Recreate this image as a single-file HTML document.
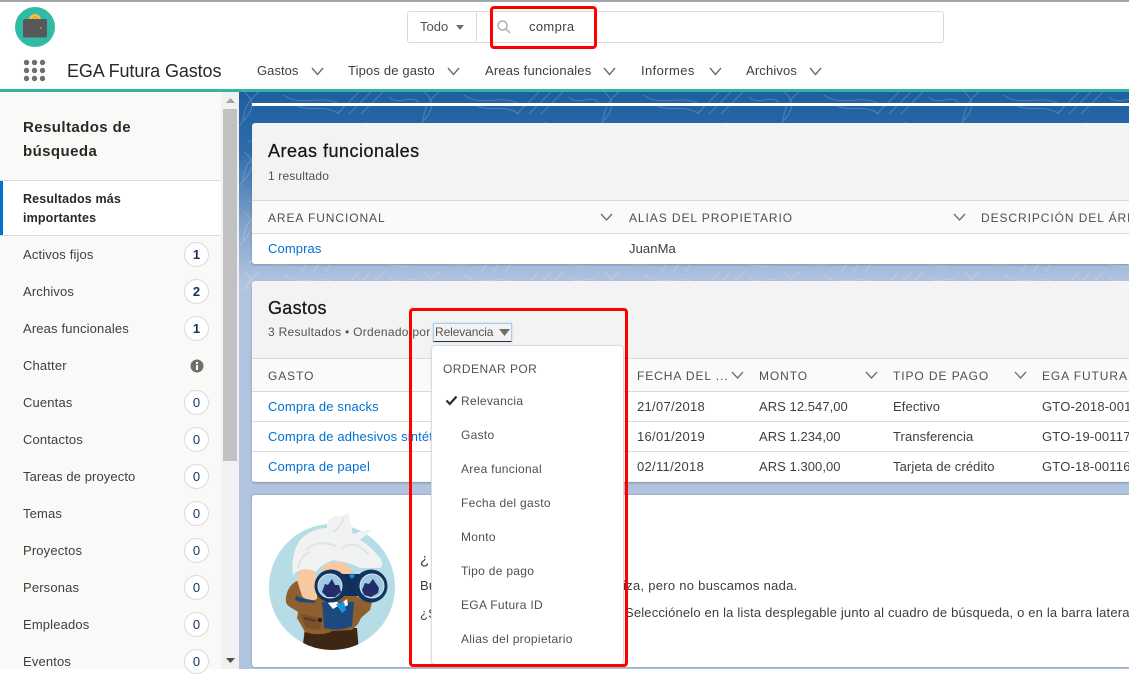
<!DOCTYPE html>
<html lang="es"><head><meta charset="utf-8"><title>EGA Futura Gastos</title>
<style>
html,body{margin:0;padding:0}
body{width:1129px;height:669px;overflow:hidden;position:relative;background:#fff;font-family:"Liberation Sans",sans-serif;color:#3e3e3c}
.a{position:absolute}
.t{position:absolute;white-space:nowrap;font-size:13px;line-height:16px;letter-spacing:.2px;color:#3e3e3c}
.n{font-size:13px;color:#3e3e3c}
.s{color:#3e3e3c;letter-spacing:.15px}
.b{position:absolute;left:184px;width:23px;height:23px;border:1px solid #dddbda;border-radius:50%;background:#fff;text-align:center;font-size:13px;line-height:23px;color:#16325c}
.th{font-size:12px;letter-spacing:.92px;color:#514f4d}
.lk{color:#0070d2}
.m{color:#514f4d;font-size:12px;letter-spacing:.3px}
.hl{position:absolute;height:1px;background:#dddbda}
svg{position:absolute;overflow:visible}
</style></head><body>

<!-- top bar -->
<div class="a" style="left:0;top:0;width:1129px;height:2px;background:#a3a3ab"></div>
<div class="a" style="left:15px;top:7px;width:40px;height:40px;border-radius:50%;background:#2fbba6"></div>
<svg style="left:15px;top:7px" width="40" height="40" viewBox="0 0 40 40">
<circle cx="20" cy="13" r="6" fill="#f4c542"/><circle cx="20" cy="13" r="3" fill="none" stroke="#d69a1f" stroke-width="1"/>
<rect x="8" y="12" width="24" height="18.500" rx="2" fill="#58585a"/>
<circle cx="26" cy="21" r=".8" fill="#e3b23c"/></svg>
<svg style="left:23px;top:59px" width="24" height="24" fill="#706e6b">
<circle cx="3.500" cy="3.500" r="2.700"/><circle cx="11.500" cy="3.500" r="2.700"/><circle cx="19.500" cy="3.500" r="2.700"/>
<circle cx="3.500" cy="11.500" r="2.700"/><circle cx="11.500" cy="11.500" r="2.700"/><circle cx="19.500" cy="11.500" r="2.700"/>
<circle cx="3.500" cy="19.500" r="2.700"/><circle cx="11.500" cy="19.500" r="2.700"/><circle cx="19.500" cy="19.500" r="2.700"/></svg>
<span class="t" style="left:67px;top:61px;font-size:18px;line-height:20px;letter-spacing:-.1px;color:#2b2826">EGA Futura Gastos</span>

<span class="t n" style="left:257px;top:63px;letter-spacing:.05px">Gastos</span>
<svg style="left:311px;top:67px" width="13" height="9" fill="none" stroke="#706e6b" stroke-width="1.400"><path d="M1 1l5.500 6.500L12 1"/></svg>
<span class="t n" style="left:348px;top:63px;letter-spacing:.15px">Tipos de gasto</span>
<svg style="left:447px;top:67px" width="13" height="9" fill="none" stroke="#706e6b" stroke-width="1.400"><path d="M1 1l5.500 6.500L12 1"/></svg>
<span class="t n" style="left:485px;top:63px;letter-spacing:.18px">Areas funcionales</span>
<svg style="left:603px;top:67px" width="13" height="9" fill="none" stroke="#706e6b" stroke-width="1.400"><path d="M1 1l5.500 6.500L12 1"/></svg>
<span class="t n" style="left:641px;top:63px;letter-spacing:.4px">Informes</span>
<svg style="left:709px;top:67px" width="13" height="9" fill="none" stroke="#706e6b" stroke-width="1.400"><path d="M1 1l5.500 6.500L12 1"/></svg>
<span class="t n" style="left:746px;top:63px;letter-spacing:.15px">Archivos</span>
<svg style="left:809px;top:67px" width="13" height="9" fill="none" stroke="#706e6b" stroke-width="1.400"><path d="M1 1l5.500 6.500L12 1"/></svg>

<!-- search -->
<div class="a" style="left:407px;top:11px;width:535px;height:30px;border:1px solid #dddbda;border-radius:3px;background:#fff"></div>
<div class="a" style="left:476px;top:12px;width:1px;height:30px;background:#dddbda"></div>
<span class="t" style="left:420px;top:19px;color:#54524f;letter-spacing:0">Todo</span>
<svg style="left:456px;top:25px" width="8" height="5"><path d="M0 0h8L4 5z" fill="#706e6b"/></svg>
<svg style="left:497px;top:20px" width="14" height="14" fill="none" stroke="#b0adab" stroke-width="1.500"><circle cx="5.500" cy="5.500" r="4.500"/><path d="M9 9l4 4"/></svg>
<span class="t" style="left:529px;top:19px;color:#3e3e3c;letter-spacing:.35px">compra</span>

<div class="a" style="left:0;top:89px;width:1129px;height:3px;background:#2fb5a0"></div>

<!-- main background -->
<div class="a" style="left:239px;top:92px;width:890px;height:577px;background:#b0c4df;background-image:linear-gradient(#1e5e9f 0,#2f6cab 60px,#7fa0c9 130px,#b0c4df 190px,#b0c4df 100%)"></div>
<svg style="left:239px;top:92px;overflow:hidden" width="890" height="200">
<defs><pattern id="c" width="180" height="60" patternUnits="userSpaceOnUse">
<g fill="none" stroke="#fff" stroke-opacity=".2" stroke-width="1">
<path d="M5 0c16 12 4 24 -5 34M20 0c-10 8 -14 14 -16 28M45 3c18 14 40 -4 60 12M58 14c14 6 28 -2 42 8M120 0l-22 22M132 0l-22 22M144 0l-22 22M150 5c10 10 22 -4 30 6M28 34c14 -6 30 8 46 0s24 6 40 2M126 30c16 12 30 2 54 12M10 50c12 -6 24 6 38 2M70 48l-8 12M82 48l-8 12M94 48l-8 12M130 50c10 -4 22 6 40 4"/>
</g></pattern></defs>
<rect width="890" height="200" fill="url(#c)"/></svg>
<div class="a" style="left:252px;top:103px;width:877px;height:3px;background:#fff"></div>

<!-- sidebar -->
<div class="a" style="left:0;top:92px;width:222px;height:577px;background:#f9f9f8"></div>
<span class="t" style="left:23px;top:116px;font-size:15px;line-height:24px;font-weight:bold;color:#2b2826;white-space:normal;width:140px;letter-spacing:.42px">Resultados de búsqueda</span>
<div class="a" style="left:0;top:180px;width:221px;height:54px;background:#fff;border-top:1px solid #dddbda;border-bottom:1px solid #dddbda"></div>
<div class="a" style="left:0;top:181px;width:3px;height:54px;background:#0070d2"></div>
<span class="t" style="left:23px;top:190px;font-weight:bold;line-height:19px;font-size:12.500px;color:#2b2826;width:140px;white-space:normal;letter-spacing:.15px">Resultados más importantes</span>

<span class="t s" style="left:23px;top:247px">Activos fijos</span><div class="b" style="top:242px;font-weight:bold">1</div>
<span class="t s" style="left:23px;top:284px">Archivos</span><div class="b" style="top:279px;font-weight:bold">2</div>
<span class="t s" style="left:23px;top:321px">Areas funcionales</span><div class="b" style="top:316px;font-weight:bold">1</div>
<span class="t s" style="left:23px;top:358px">Chatter</span>
<svg style="left:190px;top:359px" width="14" height="14"><circle cx="7" cy="7" r="6.500" fill="#706e6b"/><rect x="6" y="6" width="2" height="5" fill="#fff"/><rect x="6" y="3" width="2" height="2" fill="#fff"/></svg>
<span class="t s" style="left:23px;top:395px">Cuentas</span><div class="b" style="top:390px">0</div>
<span class="t s" style="left:23px;top:432px">Contactos</span><div class="b" style="top:427px">0</div>
<span class="t s" style="left:23px;top:469px;letter-spacing:.1px">Tareas de proyecto</span><div class="b" style="top:464px">0</div>
<span class="t s" style="left:23px;top:506px">Temas</span><div class="b" style="top:501px">0</div>
<span class="t s" style="left:23px;top:543px">Proyectos</span><div class="b" style="top:538px">0</div>
<span class="t s" style="left:23px;top:580px">Personas</span><div class="b" style="top:575px">0</div>
<span class="t s" style="left:23px;top:617px">Empleados</span><div class="b" style="top:612px">0</div>
<span class="t s" style="left:23px;top:654px">Eventos</span><div class="b" style="top:649px">0</div>

<!-- scrollbar -->
<div class="a" style="left:221px;top:92px;width:18px;height:577px;background:#f1f1f1"></div>
<div class="a" style="left:223px;top:109px;width:14px;height:352px;background:#c1c1c1"></div>
<svg style="left:226px;top:98px" width="9" height="5"><path d="M0 5L4.500 0 9 5z" fill="#a3a3a3"/></svg>
<svg style="left:226px;top:658px" width="9" height="5"><path d="M0 0L4.500 5 9 0z" fill="#505050"/></svg>

<!-- card 1 -->
<div class="a" style="left:252px;top:123px;width:877px;height:141px;background:#f3f3f3;border-radius:3px 0 0 3px;box-shadow:0 1px 2px rgba(0,0,0,.2)"></div>
<span class="t" style="left:268px;top:140px;font-size:18px;line-height:22px;letter-spacing:.5px;color:#16161a;-webkit-text-stroke:.25px #16161a">Areas funcionales</span>
<span class="t" style="left:268px;top:168px;font-size:12px;letter-spacing:.15px;color:#54524f">1 resultado</span>
<div class="a" style="left:252px;top:200px;width:877px;height:32px;background:#fafaf9;border-top:1px solid #dddbda;border-bottom:1px solid #dddbda"></div>
<div class="a" style="left:252px;top:234px;width:877px;height:30px;background:#fff;border-radius:0 0 0 3px"></div>
<span class="t th" style="left:268px;top:210px">AREA FUNCIONAL</span>
<svg style="left:600px;top:213px" width="13" height="8" fill="none" stroke="#706e6b" stroke-width="1.300"><path d="M1 1l5.500 6L12 1"/></svg>
<span class="t th" style="left:629px;top:210px">ALIAS DEL PROPIETARIO</span>
<svg style="left:953px;top:213px" width="13" height="8" fill="none" stroke="#706e6b" stroke-width="1.300"><path d="M1 1l5.500 6L12 1"/></svg>
<span class="t th" style="left:981px;top:210px">DESCRIPCIÓN DEL ÁREA</span>
<span class="t lk" style="left:268px;top:241px;letter-spacing:.1px">Compras</span>
<span class="t" style="left:629px;top:241px;letter-spacing:.1px">JuanMa</span>

<!-- card 2 -->
<div class="a" style="left:252px;top:281px;width:877px;height:201px;background:#f3f3f3;border-radius:3px 0 0 3px;box-shadow:0 1px 2px rgba(0,0,0,.25)"></div>
<span class="t" style="left:268px;top:297px;font-size:18px;line-height:22px;letter-spacing:.3px;color:#16161a;-webkit-text-stroke:.25px #16161a">Gastos</span>
<span class="t" style="left:268px;top:324px;font-size:12px;letter-spacing:.28px;color:#54524f">3 Resultados • Ordenado por</span>
<div class="a" style="left:252px;top:358px;width:877px;height:32px;background:#fafaf9;border-top:1px solid #dddbda;border-bottom:1px solid #dddbda"></div>
<div class="a" style="left:252px;top:392px;width:877px;height:89px;background:#fff"></div>
<div class="hl" style="left:252px;top:421px;width:877px"></div>
<div class="hl" style="left:252px;top:451px;width:877px"></div>
<span class="t th" style="left:268px;top:368px">GASTO</span>
<span class="t th" style="left:637px;top:368px">FECHA DEL ...</span>
<svg style="left:731px;top:371px" width="13" height="8" fill="none" stroke="#706e6b" stroke-width="1.300"><path d="M1 1l5.500 6L12 1"/></svg>
<span class="t th" style="left:759px;top:368px">MONTO</span>
<svg style="left:865px;top:371px" width="13" height="8" fill="none" stroke="#706e6b" stroke-width="1.300"><path d="M1 1l5.500 6L12 1"/></svg>
<span class="t th" style="left:893px;top:368px">TIPO DE PAGO</span>
<svg style="left:1014px;top:371px" width="13" height="8" fill="none" stroke="#706e6b" stroke-width="1.300"><path d="M1 1l5.500 6L12 1"/></svg>
<span class="t th" style="left:1042px;top:368px">EGA FUTURA ID</span>
<span class="t lk" style="left:268px;top:399px;letter-spacing:.15px">Compra de snacks</span>
<span class="t lk" style="left:268px;top:429px;letter-spacing:.15px">Compra de adhesivos sintéticos</span>
<span class="t lk" style="left:268px;top:459px;letter-spacing:.15px">Compra de papel</span>
<span class="t" style="left:637px;top:399px;letter-spacing:.3px">21/07/2018</span>
<span class="t" style="left:637px;top:429px;letter-spacing:.3px">16/01/2019</span>
<span class="t" style="left:637px;top:459px;letter-spacing:.3px">02/11/2018</span>
<span class="t" style="left:759px;top:399px;letter-spacing:.05px">ARS 12.547,00</span>
<span class="t" style="left:759px;top:429px;letter-spacing:.05px">ARS 1.234,00</span>
<span class="t" style="left:759px;top:459px;letter-spacing:.05px">ARS 1.300,00</span>
<span class="t" style="left:893px;top:399px;letter-spacing:.1px">Efectivo</span>
<span class="t" style="left:893px;top:429px;letter-spacing:.1px">Transferencia</span>
<span class="t" style="left:893px;top:459px;letter-spacing:.1px">Tarjeta de crédito</span>
<span class="t" style="left:1042px;top:399px">GTO-2018-00118</span>
<span class="t" style="left:1042px;top:429px">GTO-19-00117</span>
<span class="t" style="left:1042px;top:459px">GTO-18-00116</span>

<!-- card 3 -->
<div class="a" style="left:252px;top:495px;width:877px;height:172px;background:#fff;border-radius:3px 0 0 3px;box-shadow:0 0 2px rgba(0,0,0,.25)"></div>
<svg style="left:250px;top:490px" width="200" height="179" viewBox="0 0 200 179">
<defs><clipPath id="cc"><circle cx="82" cy="97" r="63"/></clipPath></defs>
<circle cx="82" cy="97" r="63" fill="#b6dce6"/>
<g clip-path="url(#cc)"><path d="M55 138h52l2 24H52z" fill="#3e2614"/></g>
<path d="M47 91C40 94 35 103 36 112c0 4 10 8 12 10l-1 6 8 14c10 4 24 2 27-1l20-1 6-6 3-6 9-8 2-8-10-2-28-20z" fill="#8e6030"/>
<path d="M50 124l22 4-2 12-14-2z" fill="#7a5128"/>
<path d="M54 128l12 3" stroke="#5d3a26" stroke-width="2"/>
<circle cx="70" cy="130" r="2" fill="#2c1a0c"/>
<path d="M72 112h32l-2 24q-14 6-28 2z" fill="#1d4a7e"/>
<path d="M78 113l6-3 6 4 7-5 1 6-6 3-4-2-5 3z" fill="#fff"/>
<path d="M86 114l8-2 2 8-4 3z" fill="#1b96db"/>
<path d="M48 93c-2-6 0-12 6-14 6-2 12 2 13 8v22c-5 3-12 1-15-3z" fill="#f8c8a0"/>
<path d="M46 106l6 2 14 3-2 2-14-1-5-2z" fill="#1d4a7e"/>
<path d="M72 78c6-8 20-8 28-2l2 8H72z" fill="#f8c8a0"/>
<path d="M43 85C41 70 45 55 52 48 58 42 68 38 77 38 76 32 80 28 85 26 90 26 92 27 95 24L99 22C100 30 101 38 103 44 110 41 118 40 122 40 118 44 113 47 110 50 118 54 125 62 130 68 133 72 133 76 130 78L110 78C100 72 90 72 84 70 78 72 70 75 66 82 58 78 50 78 43 85Z" fill="#f1f2f2"/>
<path d="M56 60c8-8 20-8 30-4M92 58c8-6 18-4 26 6M48 78c2-8 6-14 12-16M84 42c4-4 8-8 10-14" fill="none" stroke="#e2e3e3" stroke-width="2"/>
<rect x="78" y="84" width="32" height="22" fill="#0f2f5c"/>
<circle cx="81" cy="96" r="16.500" fill="#12325f"/><circle cx="121" cy="96" r="16.500" fill="#12325f"/>
<circle cx="80" cy="96" r="12" fill="#9fc9df" stroke="#d6e6ef" stroke-width="1"/>
<circle cx="122" cy="96" r="12" fill="#9fc9df" stroke="#d6e6ef" stroke-width="1"/>
<path d="M72 102l3-8 3 1 4-6 3 6 4 0 2 7-6 5h-8z" fill="#242c6c"/>
<path d="M112 100l3-7 4 1 4-5 6 9-1 5-7 4-7-2z" fill="#242c6c"/>
<circle cx="102" cy="86" r="2.500" fill="#1589d6"/>
</svg>
<span class="t" style="left:420px;top:552px;font-size:15px">¿</span>
<span class="t" style="left:420px;top:578px">Bu</span>
<span class="t" style="left:420px;top:606px">¿S</span>
<span class="t" style="left:623px;top:578px;letter-spacing:.28px">iza, pero no buscamos nada.</span>
<span class="t" style="left:625px;top:605px;letter-spacing:.17px">Selecciónelo en la lista desplegable junto al cuadro de búsqueda, o en la barra lateral.</span>

<!-- sort select -->
<div class="a" style="left:433px;top:323px;width:77px;height:17px;background:#f3f3f3;border:1px solid #a9cdee;border-bottom:1px solid #333;box-shadow:0 0 2px #a9cdee"></div>
<span class="t" style="left:435px;top:324px;font-size:12px;letter-spacing:-.1px;color:#54524f">Relevancia</span>
<svg style="left:499px;top:329px" width="11" height="7"><path d="M0 0h11L5.500 7z" fill="#706e6b"/></svg>

<!-- dropdown -->
<div class="a" style="left:431px;top:345px;width:191px;height:318px;background:#fff;border:1px solid #dddbda;border-radius:4px;box-shadow:0 1px 2px rgba(0,0,0,.1)"></div>
<span class="t" style="left:443px;top:361px;font-size:12px;letter-spacing:.45px;color:#54524f">ORDENAR POR</span>
<svg style="left:446px;top:395px" width="11" height="10"><path d="M.5 5.500l3.300 3.500L10.500 1.500" fill="none" stroke="#2f2d2b" stroke-width="2.200"/></svg>
<span class="t m" style="left:461px;top:393px">Relevancia</span>
<span class="t m" style="left:461px;top:427px">Gasto</span>
<span class="t m" style="left:461px;top:461px">Area funcional</span>
<span class="t m" style="left:461px;top:495px">Fecha del gasto</span>
<span class="t m" style="left:461px;top:529px">Monto</span>
<span class="t m" style="left:461px;top:563px">Tipo de pago</span>
<span class="t m" style="left:461px;top:597px">EGA Futura ID</span>
<span class="t m" style="left:461px;top:631px">Alias del propietario</span>

<!-- red annotation frames -->
<div class="a" style="left:490px;top:6px;width:101px;height:37px;border:3px solid #ff0000;border-radius:4px"></div>
<div class="a" style="left:409px;top:308px;width:213px;height:353px;border:3px solid #ff0000;border-radius:4px"></div>
</body></html>
